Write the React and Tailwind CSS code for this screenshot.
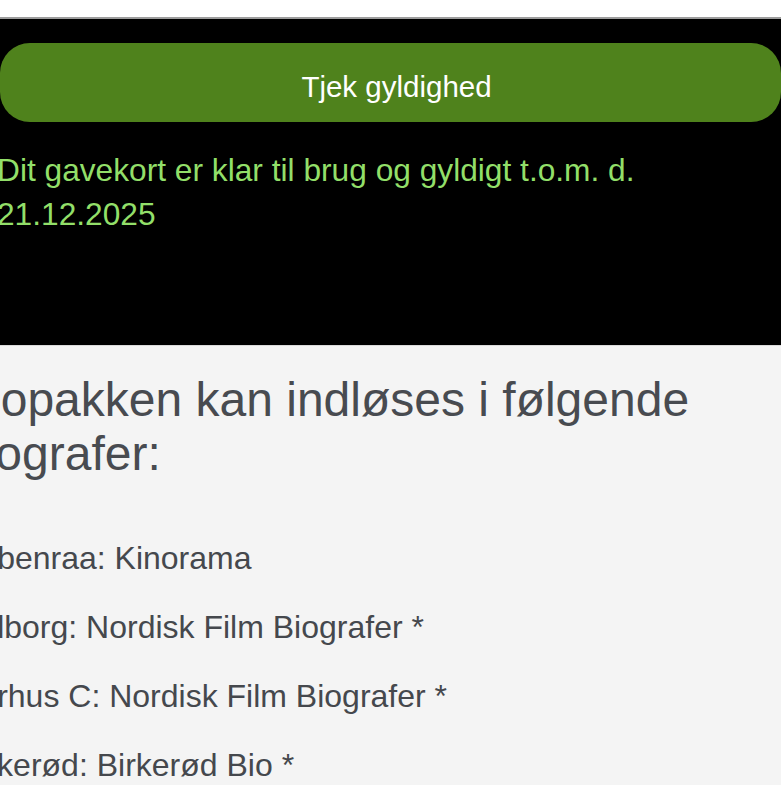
const cinemas = [
  'Aabenraa: Kinorama',
  'Aalborg: Nordisk Film Biografer *',
  'Aarhus C: Nordisk Film Biografer *',
  'Birkerød: Birkerød Bio *',
];

export default function App() {
  return (
    <div className="w-[781px] h-[785px] overflow-hidden bg-[#f4f4f4] font-['Liberation_Sans',Arial,sans-serif]">
      <div className="h-[17px] bg-white" />
      <div className="h-[2px] bg-[#9c9c9c]" />

      <div className="bg-black pt-[24px] pb-[109px]">
        <button className="w-full h-[79px] rounded-[30px] bg-[#4f821c] text-white text-[29.5px] leading-none pt-[8px] pl-[12px]">
          Tjek gyldighed
        </button>
        <p className="mt-[26px] -ml-[3px] text-[31.7px] leading-[44px] text-[#92df69]">
          Dit gavekort er klar til brug og gyldigt t.o.m. d. 21.12.2025
        </p>
      </div>

      <div className="border-t border-[#dadada] -ml-[42px] pt-[27px]">
        <h2 className="text-[48px] leading-[54px] text-[#484b50] font-normal">
          Biopakken kan indløses i følgende biografer:
        </h2>
        <ul className="mt-[43px] text-[32px] leading-[69px] text-[#45484d]">
          {cinemas.map((c) => (
            <li key={c} className="whitespace-nowrap">{c}</li>
          ))}
        </ul>
      </div>
    </div>
  );
}
